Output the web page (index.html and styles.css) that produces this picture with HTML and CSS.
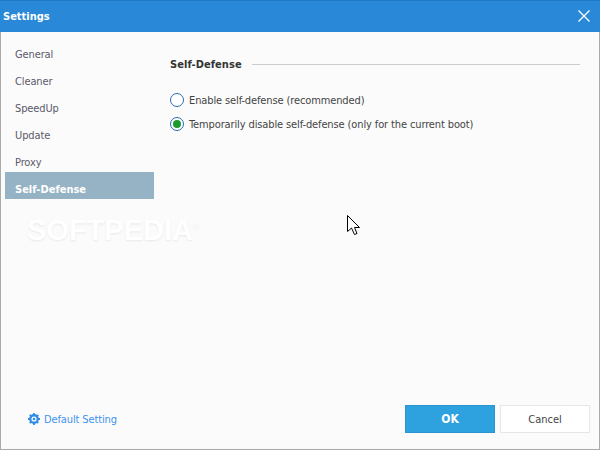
FILE: index.html
```html
<!DOCTYPE html>
<html lang="en">

<head>
    <meta charset="UTF-8">
    <meta name="viewport" content="width=device-width, initial-scale=1.0">
    <title>Settings</title>
    <link rel="stylesheet" href="styles.css">
</head>

<body>
    <div class="window">
        <div class="title-bar">
            <span class="title">Settings</span>
            <svg class="close-icon" width="12" height="12" viewBox="0 0 12 12">
                <path d="M0.5 0.5L11.5 11.5M11.5 0.5L0.5 11.5" stroke="#fff" stroke-width="1.3" fill="none" />
            </svg>
        </div>

        <div class="content">
            <div class="sidebar">
                <div class="nav-item">General</div>
                <div class="nav-item">Cleaner</div>
                <div class="nav-item">SpeedUp</div>
                <div class="nav-item">Update</div>
                <div class="nav-item">Proxy</div>
                <div class="nav-item active">Self-Defense</div>
            </div>

            <div class="main">
                <div class="section-head">
                    <span class="section-title">Self-Defense</span>
                    <span class="section-line"></span>
                </div>
                <div class="option">
                    <span class="radio"></span>
                    <span>Enable self-defense (recommended)</span>
                </div>
                <div class="option">
                    <span class="radio checked"></span>
                    <span>Temporarily disable self-defense (only for the current boot)</span>
                </div>
            </div>
        </div>

        <div class="footer">
            <div class="default-link">
                <svg width="12" height="12" viewBox="0 0 12 12">
                    <circle cx="6" cy="6" r="3.6" fill="none" stroke="#2f8de4" stroke-width="2.6" />
                    <path d="M6 0V12M0 6H12M1.8 1.8L10.2 10.2M10.2 1.8L1.8 10.2" stroke="#2f8de4" stroke-width="1.8" />
                    <circle cx="6" cy="6" r="2.6" fill="#fbfbfd" />
                    <circle cx="6" cy="6" r="1.3" fill="#2f8de4" />
                </svg>
                <span>Default Setting</span>
            </div>
            <div class="buttons">
                <button class="btn btn-ok">OK</button>
                <button class="btn btn-cancel">Cancel</button>
            </div>
        </div>

        <div class="watermark">SOFTPEDIA<sup>®</sup></div>

        <svg class="cursor" width="13" height="21" viewBox="0 0 13 21">
            <path d="M0.5 0.5V16.5L4.5 13L7.5 19.5L10 18.5L7.5 12.5H12.5Z" fill="#fff" stroke="#000" stroke-width="1" />
        </svg>
    </div>
</body>

</html>
```

FILE: styles.css
```css
* {
    box-sizing: border-box;
}

body {
    margin: 0;
    font-family: "DejaVu Sans Condensed", "DejaVu Sans", sans-serif;
    font-stretch: condensed;
    font-size: 11px;
    letter-spacing: -0.12px;
    color: #333;
}

.window {
    position: relative;
    width: 600px;
    height: 450px;
    display: flex;
    flex-direction: column;
    background: #fbfbfb;
    border-left: 1px solid #aaa;
    border-right: 1px solid #aaa;
    border-bottom: 1px solid #aaa;
}

.title-bar {
    height: 32px;
    margin: 0 -1px;
    padding: 0 10px 1px 3px;
    display: flex;
    align-items: center;
    justify-content: space-between;
    background: #2a88d8;
    border-top: 1px solid #1f78c4;
}

.title {
    color: white;
    font-weight: bold;
    letter-spacing: 0;
}

.content {
    flex: 1;
    display: flex;
}

.sidebar {
    width: 153px;
    padding: 9px 0 0 4px;
}

.nav-item {
    height: 27px;
    line-height: 27px;
    padding-left: 10px;
    color: #5a5a6a;
}

.nav-item.active {
    margin-top: -4px;
    line-height: 35px;
    background: #95b3c4;
    color: white;
    font-weight: bold;
    letter-spacing: 0;
}

.main {
    flex: 1;
    padding: 24px 19px 0 16px;
}

.section-head {
    display: flex;
    align-items: center;
    gap: 10px;
    height: 16px;
    margin-bottom: 16px;
}

.section-title {
    font-weight: bold;
    color: #333;
    letter-spacing: 0.05px;
}

.section-line {
    flex: 1;
    height: 1px;
    background: #ccc;
}

.option {
    height: 24px;
    display: flex;
    align-items: center;
    gap: 5px;
    color: #444;
}

.radio {
    width: 14px;
    height: 14px;
    border: 1px solid #2a6cb0;
    border-radius: 50%;
    background: white;
    display: flex;
    align-items: center;
    justify-content: center;
}

.radio.checked::after {
    content: "";
    width: 8px;
    height: 8px;
    border-radius: 50%;
    background: #1d9a2e;
}

.footer {
    height: 55px;
    padding: 0 9px 16px 27px;
    display: flex;
    align-items: flex-end;
    justify-content: space-between;
}

.default-link {
    height: 28px;
    display: flex;
    align-items: center;
    gap: 4px;
    color: #3f93ee;
}

.buttons {
    display: flex;
    gap: 5px;
}

.btn {
    width: 90px;
    height: 28px;
    font-family: inherit;
    font-stretch: inherit;
    font-size: 12px;
    cursor: pointer;
}

.btn-ok {
    background: #2ea1df;
    border: 1px solid #2a94cf;
    color: white;
    font-weight: bold;
}

.btn-cancel {
    background: white;
    border: 1px solid #e6e6e6;
    color: #444;
    font-size: 11px;
}

.watermark {
    position: absolute;
    left: 26px;
    top: 209px;
    font-family: "Liberation Sans", sans-serif;
    font-size: 29px;
    font-weight: bold;
    letter-spacing: 0;
    line-height: 34px;
    color: #ffffff;
    text-shadow: 0 1px 2px #e8e8e8;
}

.watermark sup {
    font-size: 9px;
}

.cursor {
    position: absolute;
    left: 346px;
    top: 215px;
}
```
